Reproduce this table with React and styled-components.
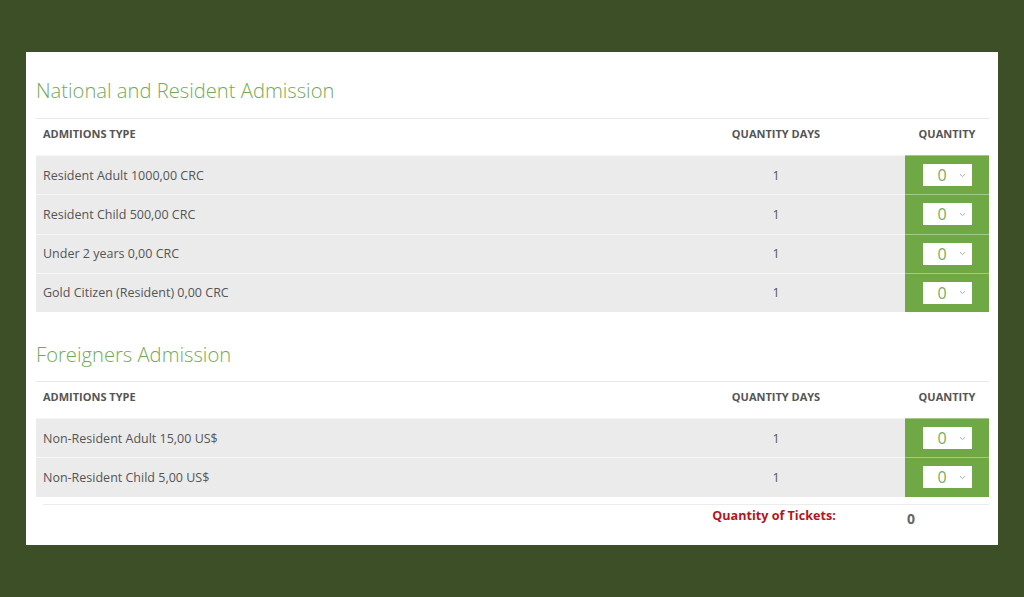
import React from 'react';
import styled, { createGlobalStyle } from 'styled-components';

const GlobalStyle = createGlobalStyle`
  html, body {
    margin: 0;
    padding: 0;
    background: #3c4f26;
    font-family: "Open Sans", "Liberation Sans", sans-serif;
  }
  #root {
    min-height: 597px;
  }
`;

const Page = styled.div`
  width: 1024px;
  height: 597px;
  box-sizing: border-box;
  padding: 52px 26px 0 26px;
`;

const Card = styled.div`
  background: #ffffff;
  height: 493px;
  box-sizing: border-box;
  padding: 0 9px 0 10px;
  display: flex;
  flex-direction: column;
`;

const Title = styled.h2`
  margin: ${p => (p.$first ? '25px' : '29px')} 0 ${p => (p.$first ? '14px' : '13px')} 0;
  font-size: 20.2px;
  line-height: 27px;
  font-weight: 300;
  color: #74aa55;
`;

const Table = styled.div`
  display: flex;
  flex-direction: column;
  border-top: 1px solid #e8e8e8;
`;

const Row = styled.div`
  display: grid;
  grid-template-columns: 611px 258px 84px;
  height: ${p => (p.$head ? '36px' : '39.25px')};
  background: ${p => (p.$head ? '#ffffff' : '#ebebeb')};
  border-top: ${p => (p.$head ? 'none' : '1px solid #f6f6f6')};
  box-sizing: border-box;
`;

const Cell = styled.div`
  display: flex;
  align-items: center;
  justify-content: ${p => (p.$align === 'left' ? 'flex-start' : 'center')};
  padding-left: ${p => (p.$align === 'left' ? '7px' : '0')};
  padding-bottom: ${p => (p.$head ? '8px' : '0')};
  font-size: ${p => (p.$head ? '11px' : '12.5px')};
  font-weight: ${p => (p.$head ? 700 : 400)};
  color: #555;
  text-transform: ${p => (p.$head ? 'uppercase' : 'none')};
  white-space: nowrap;
`;

const QtyCell = styled.div`
  display: flex;
  align-items: center;
  justify-content: center;
  background: #6fa844;
  margin-top: -1px;
  border-top: 1px solid #a3c98a;
`;

const SelectBox = styled.div`
  width: 49px;
  height: 22px;
  background: #ffffff;
  display: flex;
  align-items: center;
  box-sizing: border-box;
  padding: 0 6px 0 15px;
  justify-content: space-between;
  color: #79ad5a;
  font-size: 16px;
`;

const Chevron = () => (
  <svg width="7" height="5" viewBox="0 0 7 5">
    <path d="M1 1.2 L3.5 3.6 L6 1.2" fill="none" stroke="#aaa" strokeWidth="1" />
  </svg>
);

const Footer = styled.div`
  margin: 7px 0 0 7px;
  border-top: 1px solid #ececec;
  display: grid;
  grid-template-columns: 604px 254px 84px;
  height: 32px;
`;

const TotalLabel = styled.div`
  display: flex;
  justify-content: center;
  padding-top: 2px;
  font-size: 12.6px;
  font-weight: 700;
  color: #b3161b;
`;

const TotalValue = styled.div`
  padding: 4px 0 0 6px;
  font-size: 14px;
  font-weight: 700;
  color: #666;
`;

const national = [
  'Resident Adult 1000,00 CRC',
  'Resident Child 500,00 CRC',
  'Under 2 years 0,00 CRC',
  'Gold Citizen (Resident) 0,00 CRC',
];

const foreign = ['Non-Resident Adult 15,00 US$', 'Non-Resident Child 5,00 US$'];

const AdmissionTable = ({ items }) => (
  <Table>
    <Row $head>
      <Cell $head $align="left">Admitions Type</Cell>
      <Cell $head>Quantity Days</Cell>
      <Cell $head>Quantity</Cell>
    </Row>
    {items.map(name => (
      <Row key={name}>
        <Cell $align="left">{name}</Cell>
        <Cell>1</Cell>
        <QtyCell>
          <SelectBox>
            <span>0</span>
            <Chevron />
          </SelectBox>
        </QtyCell>
      </Row>
    ))}
  </Table>
);

const App = () => (
  <Page>
    <GlobalStyle />
    <Card>
      <Title $first>National and Resident Admission</Title>
      <AdmissionTable items={national} />
      <Title>Foreigners Admission</Title>
      <AdmissionTable items={foreign} />
      <Footer>
        <div />
        <TotalLabel>Quantity of Tickets:</TotalLabel>
        <TotalValue>0</TotalValue>
      </Footer>
    </Card>
  </Page>
);

export default App;
